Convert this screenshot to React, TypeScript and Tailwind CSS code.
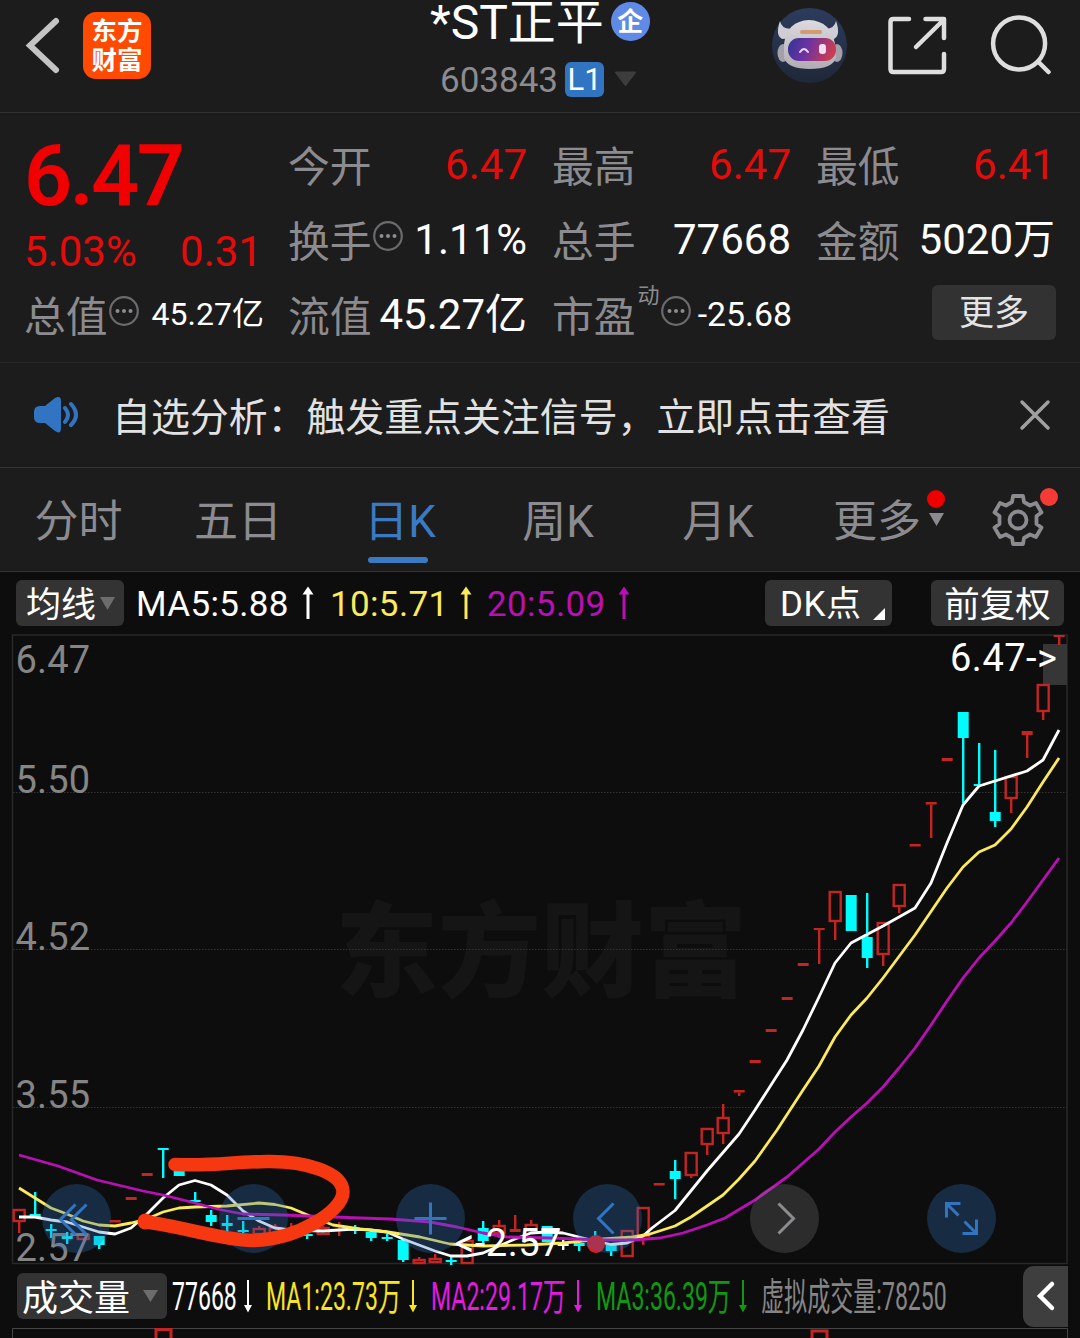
import type { ReactNode } from 'react';
import { clsx } from 'clsx';

const RED = '#c42422';
const CYAN = '#00fcfc';

// [kind, high, bodyTop, bodyBottom, low]; r = rising, f = falling, w = flat
type Candle = ['r' | 'f' | 'w', number, number, number, number];

const PANE_TOP = 634;
const FIRST_X = 19.2;
const STEP = 16;

const CANDLES: Candle[] = [
  ['r', 1209, 1209, 1222, 1233],
  ['f', 1192, 1214, 1217, 1217],
  ['f', 1224, 1229, 1231, 1238],
  ['f', 1232, 1236, 1239, 1244],
  ['r', 1233, 1234, 1240, 1240],
  ['f', 1236, 1236, 1245, 1249],
  ['r', 1220, 1220, 1222.5, 1222.5],
  ['r', 1197, 1197, 1200, 1200],
  ['r', 1173, 1173, 1176, 1176],
  ['f', 1148, 1148, 1150, 1178],
  ['f', 1166, 1166, 1176, 1176],
  ['f', 1192, 1200, 1202, 1202],
  ['f', 1210, 1215, 1222, 1226],
  ['f', 1215, 1223, 1226, 1231],
  ['f', 1221, 1230, 1232, 1233],
  ['r', 1226, 1228, 1235, 1235],
  ['r', 1224, 1227, 1235, 1235],
  ['r', 1223, 1230, 1232, 1240],
  ['f', 1228, 1234, 1236, 1239],
  ['r', 1226, 1227, 1235, 1235],
  ['r', 1222, 1229, 1231, 1236],
  ['f', 1225, 1229, 1231, 1234],
  ['f', 1231, 1232, 1238, 1241],
  ['f', 1234, 1237, 1239, 1241],
  ['f', 1240, 1240, 1260, 1262],
  ['r', 1257, 1259, 1264, 1264],
  ['r', 1254, 1258, 1263, 1263],
  ['f', 1256, 1260, 1262, 1265],
  ['r', 1240, 1240, 1264, 1264],
  ['f', 1221, 1228, 1241, 1243],
  ['r', 1220, 1225, 1234, 1238],
  ['r', 1215, 1229, 1232, 1232],
  ['r', 1220, 1224, 1231, 1231],
  ['f', 1226, 1226, 1242, 1242],
  ['w', 1240, 1244, 1246, 1250],
  ['f', 1242, 1243, 1246, 1251],
  ['f', 1231, 1240, 1243, 1243],
  ['f', 1245, 1245, 1251, 1256],
  ['r', 1230, 1230, 1257, 1257],
  ['r', 1207, 1207, 1237, 1245],
  ['r', 1183, 1183, 1185.5, 1185.5],
  ['f', 1160, 1171, 1179, 1199],
  ['r', 1152, 1152, 1176, 1178],
  ['r', 1128, 1128, 1145, 1155],
  ['r', 1104, 1117, 1134, 1144],
  ['r', 1090, 1090, 1092.5, 1096],
  ['r', 1060, 1060, 1063, 1063],
  ['r', 1029, 1029, 1032, 1032],
  ['r', 997, 997, 1000, 1000],
  ['r', 963, 963, 966, 966],
  ['r', 928, 928, 930, 964],
  ['r', 891, 891, 922, 940],
  ['f', 895, 895, 931, 931],
  ['f', 893, 937, 958, 968],
  ['r', 922, 922, 955, 966],
  ['r', 884, 884, 907, 913],
  ['r', 844, 844, 846.5, 846.5],
  ['r', 802, 802, 804.5, 838],
  ['r', 758, 758, 761, 761],
  ['f', 712, 712, 738, 803],
  ['f', 743, 784, 786, 786],
  ['f', 750, 812, 821, 827],
  ['r', 776, 776, 799, 813],
  ['r', 731, 731, 735, 758],
  ['r', 684, 684, 712, 720],
  ['r', 635, 635, 637, 645],
];

const MA5 =
  '19,1217 35,1217 51,1220 67,1222 83,1227 99,1232 115,1234 131,1228 147,1214 163,1198 179,1185 195,1180.5 211,1185 227,1195 243,1211 259,1221 275,1228 291,1230 323,1231 355,1229 371,1230 387,1232 403,1239 419,1245 435,1251 451,1256 467,1256 483,1253 499,1246 515,1239 531,1233 547,1232 563,1233 579,1237 595,1241 611,1244.5 627,1243 643,1236 652,1228 675,1210.5 707,1171 739,1134 755,1110 771,1085 787,1060 803,1030 819,997 835,963 851,943 883,926 915,908 931,883 947,843 963,805 979,786 1027,771 1043,760 1059,730';
const MA10 =
  '19,1188 35,1198 51,1208 67,1214 83,1221 99,1225 115,1226 131,1223 147,1219 163,1212 179,1208 195,1207 227,1206 259,1203 275,1204.5 291,1208 310,1216 333,1225 360,1229 388,1232 420,1237 450,1244 483,1246 527,1245 563,1243 603,1239 633,1237 650,1234 675,1226 691,1217 723,1195 739,1179 755,1161 777,1130 803,1090 819,1066 835,1037 851,1015 867,998 883,978 915,935 947,888 963,867 979,852 995,845 1011,829 1027,807 1043,782 1059,758';
const MA20 =
  '19,1155 58,1166 97,1180 143,1191 163,1195 195,1203 217,1209 243,1214 283,1215 360,1218 390,1219 430,1222 457,1227 483,1233 507,1237 550,1238 603,1240 633,1240 660,1238 683,1233 707,1225 725,1218 755,1200 787,1177 819,1149 835,1132 851,1117 867,1103 883,1087 899,1068 915,1048 931,1025 947,1001 963,978 979,958 995,941 1011,923 1027,902 1043,880 1059,858';

const AXIS = [
  { label: '6.47', y: 673 },
  { label: '5.50', y: 793 },
  { label: '4.52', y: 950 },
  { label: '3.55', y: 1108 },
  { label: '2.57', y: 1261 },
];

const TABS = [
  { label: '分时', space: 'w-[157px]' },
  { label: '五日', space: 'w-[162px]' },
  { label: '日K', space: 'w-[162px]', active: true },
  { label: '周K', space: 'w-[154px]' },
  { label: '月K', space: 'w-[166px]' },
];

export default function App() {
  return (
    <div className="flex h-[1338px] w-[1080px] flex-col overflow-hidden bg-[#0d0d0d] font-['Roboto','Noto_Sans_CJK_SC',sans-serif] text-white">
      <Header />
      <Quotes />
      <Notice />
      <PeriodTabs />
      <AverageBar />
      <KLineChart />
      <VolumeBar />
      <svg width="1080" height="10" className="shrink-0">
        <path d="M12.5 10V.5H1067.5V10" fill="none" stroke="#454545" />
        <path d="M156 10V1.5H171V10M812 10V3H827V10" fill="none" stroke={RED} strokeWidth="3" />
      </svg>
    </div>
  );
}

function Header() {
  return (
    <header className="flex h-[113px] shrink-0 items-start border-b border-[#323232] bg-[#1c1c1c] pr-[29px] pl-[25px]">
      <div className="flex w-[405px] items-start gap-[22px] pt-[12px]">
        <svg width="36" height="68" viewBox="25 12 36 68" fill="none">
          <path d="M56 21 30 45.500 56 70" stroke="#c4c4c4" strokeWidth="6" strokeLinecap="round" />
        </svg>
        <div className="flex h-[67px] w-[68px] flex-col items-center justify-center rounded-[13px] bg-[#ff4a00] text-[25.500px] leading-[29px] font-bold">
          <span>东方</span>
          <span>财富</span>
        </div>
      </div>

      <div className="flex w-[222px] flex-col">
        <div className="flex h-[43px] items-center gap-[7px] whitespace-nowrap">
          <span className="pt-[2px] text-[48px] leading-[43px]">*ST正平</span>
          <span className="flex size-[39px] items-center justify-center rounded-full bg-[#5f8ae6] text-[26px] leading-none font-bold">
            企
          </span>
        </div>
        <div className="mt-[18px] ml-[10px] flex h-[36px] items-center">
          <span className="pt-[3px] text-[35px] leading-[36px] text-[#8b8b90]">603843</span>
          <span className="ml-[7px] flex h-[35px] w-[39px] items-center justify-center rounded-[6px] bg-[#3175c2] text-[31px] leading-[35px]">
            L1
          </span>
          <svg width="23" height="16" className="ml-[10px]">
            <path d="M2 1.500H21L11.500 14Z" fill="#3d3d3d" stroke="#3d3d3d" strokeWidth="2" strokeLinejoin="round" />
          </svg>
        </div>
      </div>

      <div className="ml-auto flex items-start gap-[40px] pt-[8px]">
        <span className="-ml-px">
          <Assistant />
        </span>
        <svg width="62" height="70" viewBox="886.5 8 62 70" fill="none" stroke="#dedede" strokeWidth="4.500" strokeLinecap="round" strokeLinejoin="round">
          <path d="M908.500 19H893q-3 0-3 3V69q0 3 3 3H940.500q3 0 3-3V54" />
          <path d="M925 19H943.500V38M943 20 915.500 47" />
        </svg>
        <svg width="62" height="70" viewBox="988.5 8 62 70" fill="none" stroke="#dedede" strokeWidth="4.500" strokeLinecap="round">
          <circle cx="1018.600" cy="43.500" r="26" />
          <path d="M1038 62 1048 72" />
        </svg>
      </div>
    </header>
  );
}

function Assistant() {
  return (
    <svg width="75" height="75" viewBox="0 0 75 75">
      <defs>
        <linearGradient id="sky" x1="0" y1="0" x2="0" y2="1">
          <stop offset="0" stopColor="#2d3c5d" />
          <stop offset="1" stopColor="#1f2838" />
        </linearGradient>
        <linearGradient id="visor" x1="0" y1="0" x2="1" y2="0.200">
          <stop offset="0" stopColor="#303596" />
          <stop offset=".45" stopColor="#6b32a2" />
          <stop offset="1" stopColor="#c83c55" />
        </linearGradient>
        <linearGradient id="shell" x1="0" y1="0" x2="0" y2="1">
          <stop offset="0" stopColor="#dcdae0" />
          <stop offset="1" stopColor="#b0acb2" />
        </linearGradient>
      </defs>
      <circle cx="37.500" cy="37.500" r="37.500" fill="url(#sky)" />
      <path d="M8 13Q3 27 10 31L22 30L24 20Q10 23 8 13ZM64 13Q62 23 48 20L50 30L62 31Q69 27 64 13Z" fill="#cfcdd5" />
      <ellipse cx="11" cy="45" rx="5.500" ry="9" fill="#a2a1aa" />
      <ellipse cx="65" cy="45" rx="5.500" ry="9" fill="#a2a1aa" />
      <path d="M12 36Q15 13 37 12Q59 13 63 36L64 50Q60 61 38 61Q16 61 12 50Z" fill="url(#shell)" />
      <rect x="28" y="22" width="22" height="4" rx="2" fill="#d39b70" />
      <rect x="16" y="30" width="48" height="23" rx="11" fill="url(#visor)" />
      <path d="M28 44Q32 38 36 44" fill="none" stroke="#e5dcfa" strokeWidth="2" strokeLinecap="round" />
      <rect x="47" y="36" width="7" height="10" rx="3" fill="#f1dff0" />
    </svg>
  );
}

function Hint() {
  return (
    <svg width="30" height="30" className="mb-[10px] ml-px shrink-0" fill="none">
      <circle cx="15" cy="15" r="13.800" stroke="#6b6b6e" strokeWidth="2.200" />
      <path d="M8.500 15h.01M15 15h.01M21.500 15h.01" stroke="#8b8b90" strokeWidth="4" strokeLinecap="round" />
    </svg>
  );
}

interface StatProps {
  label: string;
  value: string;
  sup?: string;
  hint?: boolean;
  tone?: string;
  size?: string;
}

function Stat({ label, value, sup, hint, tone = 'text-white', size = 'text-[42px]' }: StatProps) {
  return (
    <div className="flex h-[75px] items-center justify-between whitespace-nowrap">
      <div className="-ml-px flex h-[75px] items-center text-[41.800px] text-[#8b8b90]">
        <span className="pt-[5px] leading-[70px]">{label}</span>
        {sup && <span className="mb-[40px] ml-[2px] text-[22px] leading-none">{sup}</span>}
        {hint && <Hint />}
      </div>
      <span className={clsx('mb-[2px] leading-[73px]', size, tone)}>{value}</span>
    </div>
  );
}

function Quotes() {
  return (
    <section className="grid h-[250px] shrink-0 grid-cols-[repeat(4,238px)] grid-rows-[75px_75px_75px] gap-x-[26px] border-b border-[#272727] bg-[#1c1c1c] px-[25px] pt-[15px]">
      <div className="row-span-2 flex flex-col text-[#f00000]">
        <span className="-ml-px h-[98px] text-[84.500px] leading-[98px] font-semibold tracking-[-2.600px]">6.47</span>
        <div className="mr-px -ml-px flex h-[52px] justify-between text-[42px] leading-[52px] text-[#e60b0b]">
          <span>5.03%</span>
          <span>0.31</span>
        </div>
      </div>
      <Stat label="今开" value="6.47" tone="text-[#e60b0b]" />
      <Stat label="最高" value="6.47" tone="text-[#e60b0b]" />
      <Stat label="最低" value="6.41" tone="text-[#e60b0b]" />
      <Stat label="换手" value="1.11%" hint />
      <Stat label="总手" value="77668" />
      <Stat label="金额" value="5020万" />
      <Stat label="总值" value="45.27亿" hint size="mr-[-1px] text-[32px]" />
      <Stat label="流值" value="45.27亿" />
      <Stat label="市盈" value="-25.68" sup="动" hint size="mr-[-1px] text-[33.800px]" />
      <div className="flex items-center justify-end">
        <button className="mr-[-1px] mb-[7px] h-[55px] w-[124px] rounded-[6px] bg-[#323232] pt-[3px] text-[35px] leading-[52px] text-[#e4e4e4]">
          更多
        </button>
      </div>
    </section>
  );
}

function Notice() {
  return (
    <section className="flex h-[105px] shrink-0 items-center border-b border-[#323232] bg-[#1c1c1c] pr-[28px] pl-[33px]">
      <svg width="46" height="40" viewBox="33 395 46 40" fill="none">
        <path d="M40 406H45L55 398Q61 395 61 401V428Q61 435 55 431L45 423H40Q34 423 34 417V412Q34 406 40 406Z" fill="#3175c2" />
        <path d="M65 408Q71 415 65 422M71 404Q81 415 71 425" stroke="#3175c2" strokeWidth="4" strokeLinecap="round" />
      </svg>
      <p className="ml-[33px] pt-[5px] text-[38.900px] leading-[60px] whitespace-nowrap text-[#e2e2e2]">
        自选分析：触发重点关注信号，立即点击查看
      </p>
      <svg width="34" height="34" className="mb-px ml-auto" fill="none">
        <path d="M4 4 30 30M30 4 4 30" stroke="#a0a0a0" strokeWidth="3.500" strokeLinecap="round" />
      </svg>
    </section>
  );
}

function PeriodTabs() {
  return (
    <nav className="flex h-[104px] shrink-0 items-stretch border-b border-[#323232] bg-[#1c1c1c] text-[44px] text-[#8b8b90]">
      {TABS.map((tab) => (
        <div key={tab.label} className={clsx('relative flex justify-center pt-[4px] leading-[100px]', tab.space, tab.active && 'text-[#3a7ac4]')}>
          {tab.label}
          {tab.active && <span className="absolute bottom-[8px] left-[49px] h-[6px] w-[60px] rounded-full bg-[#3a7ac4]" />}
        </div>
      ))}
      <div className="relative ml-[32px] flex items-center">
        <span className="pt-[6px] leading-[97px]">更多</span>
        <svg width="16" height="13" className="ml-[8px]">
          <path d="M0 0H15L7.500 13Z" fill="#8b8b90" />
        </svg>
        <span className="absolute top-[22px] right-0 size-[18px] rounded-full bg-[#ee0000]" />
      </div>
      <div className="relative ml-[47px] flex items-center">
        <svg width="52" height="52" viewBox="-26 -26 52 52" fill="none" stroke="#8b8b90" strokeWidth="3.800">
          <path d="M-5-24H5L6-18 12-14.500 18-17 23.500-7.500 18.500-4V4L23.500 7.500 18 17 12 14.500 6 18 5 24H-5L-6 18-12 14.500-18 17-23.500 7.500-18.500 4V-4L-23.500-7.500-18-17-12-14.500-6-18Z" strokeLinejoin="round" />
          <circle r="8.500" />
        </svg>
        <span className="absolute top-[20px] left-[48px] size-[18px] rounded-full bg-[#f63a36]" />
      </div>
    </nav>
  );
}

function Arrow({ color, down }: { color: string; down?: boolean }) {
  return (
    <svg width="12" height="34" viewBox="0 0 12 34" className={clsx('shrink-0', down && 'rotate-180')}>
      <path d={down ? 'M6 .5 10 8H7V33H5V8H2Z' : 'M6 .5 11.500 8.500H7.500V33H4.500V8.500H.5Z'} fill={color} />
    </svg>
  );
}

function AverageBar() {
  return (
    <div className="flex h-[62px] shrink-0 items-center pr-[16px] pl-[16px] text-[35px] leading-[59px] whitespace-nowrap">
      <button className="flex h-[46px] w-[108px] items-center rounded-[6px] bg-[#333] pl-[10px] leading-[42px]">
        <span className="pt-[5px]">均线</span>
        <svg width="15" height="13" className="ml-[4px]">
          <path d="M0 0H15L7.500 13Z" fill="#6c6c6c" />
        </svg>
      </button>
      <span className="ml-[12px] w-[166px] pt-[3px] tracking-[0.350px]">MA5:5.88</span>
      <Arrow color="#ffffff" />
      <span className="ml-[16px] w-[115px] pt-[3px] tracking-[0.350px] text-[#fbea5c]">10:5.71</span>
      <span className="ml-[15px] flex">
        <Arrow color="#fbea5c" />
      </span>
      <span className="ml-[15px] w-[131px] pt-[3px] tracking-[0.350px] text-[#b90fb5]">20:5.09</span>
      <Arrow color="#b90fb5" />
      <button className="ml-auto flex h-[46px] w-[127px] items-center rounded-[6px] bg-[#333] pl-[15px] leading-[42px]">
        <span className="pt-[4px] tracking-[0.500px]">DK点</span>
        <svg width="12" height="12" className="mt-[22px] ml-[12px]">
          <path d="M12 0V12H0Z" fill="#fff" />
        </svg>
      </button>
      <button className="ml-[39px] h-[46px] w-[133px] rounded-[6px] bg-[#333] pt-[5px] text-center text-[35.500px] leading-[41px]">
        前复权
      </button>
    </div>
  );
}

function CandleMark({ x, candle }: { x: number; candle: Candle }) {
  const [kind, high, top, bottom, low] = candle;
  const color = kind === 'r' ? RED : kind === 'f' ? CYAN : '#fff';
  const hollow = kind === 'r' && bottom - top > 4;
  return (
    <g stroke={color} strokeWidth="2.400">
      {high < top && <path d={`M${x} ${high}V${top}`} />}
      {low > bottom && <path d={`M${x} ${bottom}V${low}`} />}
      {hollow ? (
        <rect x={x - 5.500} y={top + 1} width="11" height={bottom - top - 2} fill="none" />
      ) : (
        <rect x={x - 5.500} y={top} width="11" height={bottom - top} fill={color} stroke="none" />
      )}
    </g>
  );
}

function KLineChart() {
  return (
    <div className="relative h-[630px] shrink-0">
      <svg width="1080" height="630" viewBox={`0 ${PANE_TOP} 1080 630`} className="overflow-visible">
        <text x="541" y="989" fontSize="103" fontWeight="900" textAnchor="middle" fill="#151515">
          东方财富
        </text>
        <path d="M12.500 635H1067V1263.500H12.500Z" fill="none" stroke="#282828" strokeWidth="1.500" />
        <path d="M13 792.500H1067M13 949.500H1067M13 1107.500H1067" stroke="#343434" strokeDasharray="1.500 1.500" />
        <rect x="1043" y="644" width="24" height="41" fill="#363636" />
        {CANDLES.map((candle, i) => (
          <CandleMark key={i} x={FIRST_X + i * STEP} candle={candle} />
        ))}
        <g fill="none" strokeWidth="2.800" strokeLinejoin="round">
          <polyline points={MA5} stroke="#fff" />
          <polyline points={MA10} stroke="#fbea5c" />
          <polyline points={MA20} stroke="#b90fb5" />
        </g>
        <g fill="#858585" fontSize="38" letterSpacing=".2">
          {AXIS.map(({ label, y }) => (
            <text key={label} x="15.500" y={y}>{label}</text>
          ))}
        </g>
        <g fill="#fff" fontSize="38" letterSpacing=".5">
          <text x="950" y="671">{'6.47->'}</text>
          <text x="455" y="1256">{'<-2.57'}</text>
        </g>
        <circle cx="596" cy="1244" r="9" fill="#e01b22" />
      </svg>

      <div className="absolute top-[550px] left-[42px] flex gap-[108px]">
        <RoundButton>
          <path d="M-1-14-16 1-1 16M10-14-5 1 10 16" />
        </RoundButton>
        <RoundButton>
          <path d="M-16 0H16" />
        </RoundButton>
        <RoundButton>
          <path d="M-16 0H16M0-16V16" />
        </RoundButton>
        <RoundButton>
          <path d="M6-15-9 0 6 15" />
        </RoundButton>
        <RoundButton muted>
          <path d="M-6-15 9 0-6 15" />
        </RoundButton>
        <RoundButton>
          <path d="M-15-1V-15H-1M-15-15-3-3M15 1V15H1M15 15 3 3" />
        </RoundButton>
      </div>

      {/* hand-drawn mark around the early consolidation */}
      <svg width="1080" height="630" viewBox={`0 ${PANE_TOP} 1080 630`} className="pointer-events-none absolute inset-0">
        <path
          d="M175 1164.500C216 1166 230 1162 267 1161.500C305 1161 343 1172 343 1192C343 1211 297 1240 252 1240.500C222 1240 180 1226 146 1222"
          fill="none"
          stroke="#f63811"
          strokeWidth="13.500"
          strokeLinecap="round"
        />
        <circle cx="145.500" cy="1221.500" r="8" fill="#f63811" />
      </svg>
    </div>
  );
}

function RoundButton({ children, muted }: { children: ReactNode; muted?: boolean }) {
  return (
    <button className={clsx('size-[69px] rounded-full', muted ? 'bg-[#8c8c8c]/25' : 'bg-[#3071be]/30')}>
      <svg width="69" height="69" viewBox="-34.5 -34.5 69 69" fill="none" stroke={muted ? '#8b8b90' : '#3175c2'} strokeWidth="3">
        {children}
      </svg>
    </button>
  );
}

function Narrow({ children, className }: { children: ReactNode; className: string }) {
  return (
    <span className={clsx('shrink-0 pt-[3px]', className)}>
      <span className="inline-block origin-left scale-x-[0.607]">{children}</span>
    </span>
  );
}

function VolumeBar() {
  return (
    <div className="flex h-[64px] shrink-0 items-center pl-[17px] text-[38px] leading-[61px] whitespace-nowrap">
      <button className="flex h-[46px] w-[150px] shrink-0 items-center rounded-[6px] bg-[#333] pl-[5px] text-[36px] leading-[42px]">
        <span className="pt-[5px]">成交量</span>
        <svg width="15" height="12" className="ml-[13px]">
          <path d="M0 0H15L7.500 12Z" fill="#6c6c6c" />
        </svg>
      </button>
      <Narrow className="ml-[5px] w-[70px]">77668</Narrow>
      <Arrow color="#ffffff" down />
      <Narrow className="ml-[12px] w-[141px] text-[#f7e524]">MA1:23.73万</Narrow>
      <Arrow color="#f7e524" down />
      <Narrow className="ml-[12px] w-[141px] text-[#e31be0]">MA2:29.17万</Narrow>
      <Arrow color="#e31be0" down />
      <Narrow className="ml-[12px] w-[141px] text-[#109812]">MA3:36.39万</Narrow>
      <Arrow color="#109812" down />
      <Narrow className="ml-[12px] w-[190px] text-[#858585]">虚拟成交量:78250</Narrow>
      <button className="mr-[12px] ml-auto flex h-[61px] w-[45px] shrink-0 items-center justify-center rounded-l-[11px] bg-[#3e3e3e]">
        <svg width="20" height="32" fill="none">
          <path d="M16 4 4 16 16 28" stroke="#fff" strokeWidth="4.500" strokeLinecap="round" />
        </svg>
      </button>
    </div>
  );
}
